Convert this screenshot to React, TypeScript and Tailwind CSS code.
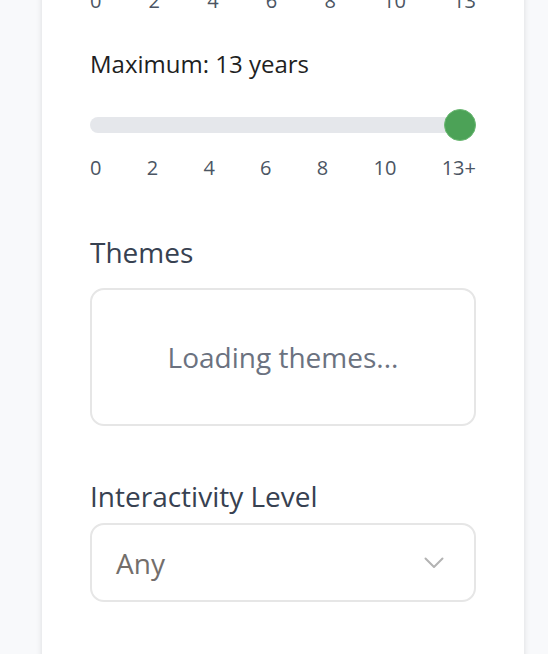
const ticks = ["0", "2", "4", "6", "8", "10", "13"];
const ticksPlus = ["0", "2", "4", "6", "8", "10", "13+"];

const TickRow = ({ labels }: { labels: string[] }) => (
  <div className="flex justify-between text-[20px] leading-7 text-[#4b5563]">
    {labels.map((t) => (
      <span key={t}>{t}</span>
    ))}
  </div>
);

const App = () => {
  return (
    <div
      className="min-h-screen bg-[#f8f9fb] overflow-hidden"
      style={{ fontFamily: '"Open Sans", "Noto Sans", sans-serif' }}
    >
      <div className="ml-[42px] w-[482px] min-h-[680px] -mt-[13px] bg-white shadow-[0_0_6px_rgba(0,0,0,0.12)] px-[48px]">
        {/* previous slider (cut off) */}
        <TickRow labels={ticks} />

        {/* maximum age */}
        <div className="mt-[33px] text-[24px] leading-8 text-[#1f1f1f]">
          Maximum: 13 years
        </div>
        <div className="relative mt-[29px] h-8">
          <div className="absolute left-0 right-0 top-2 h-4 rounded-full bg-[#e5e7eb]" />
          <div className="absolute right-0 top-0 h-8 w-8 rounded-full bg-[#4ca257] border border-[#6bb873]" />
        </div>
        <div className="mt-[13px]">
          <TickRow labels={ticksPlus} />
        </div>

        {/* themes */}
        <h3 className="mt-[52px] text-[28px] leading-9 text-[#374151]">Themes</h3>
        <div className="mt-[18px] h-[138px] rounded-[14px] border-2 border-[#e6e6e6] flex items-center justify-center">
          <span className="text-[28px] text-[#6b7280]">Loading themes...</span>
        </div>

        {/* interactivity */}
        <h3 className="mt-[52px] text-[28px] leading-9 text-[#374151]">
          Interactivity Level
        </h3>
        <div className="mt-[9px] h-[79px] rounded-[14px] border-2 border-[#e6e6e6] flex items-center justify-between pl-6 pr-[30px]">
          <span className="text-[28px] text-[#736e6b]">Any</span>
          <svg width="20" height="12" viewBox="0 0 20 12" fill="none">
            <path
              d="M1.5 1.5 L10 10 L18.5 1.5"
              stroke="#b3b3b3"
              strokeWidth="2"
              strokeLinecap="round"
              strokeLinejoin="round"
            />
          </svg>
        </div>
      </div>
    </div>
  );
};

export default App;
